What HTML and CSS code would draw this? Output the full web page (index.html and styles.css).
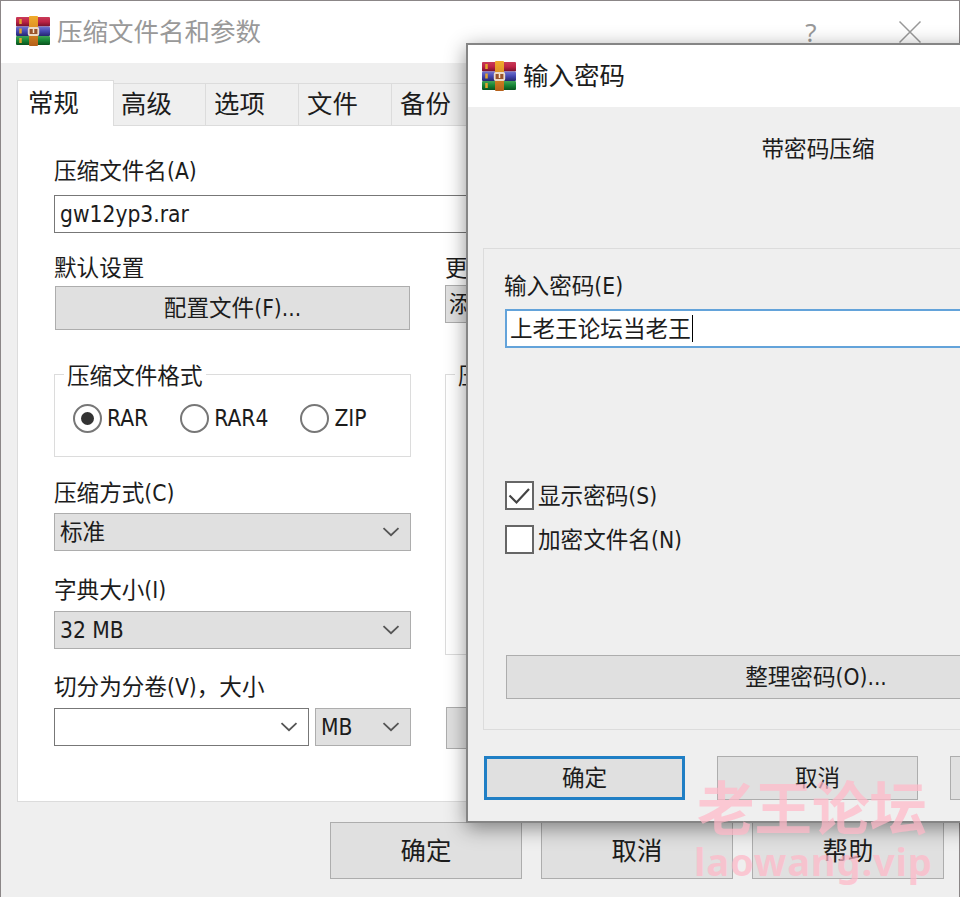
FILE: index.html
```html
<!DOCTYPE html>
<html lang="zh-CN">
<head>
<meta charset="utf-8">
<title>压缩文件名和参数</title>
<link rel="stylesheet" href="styles.css">
</head>
<body>
<svg width="0" height="0" class="defs" aria-hidden="true">
  <defs>
    <linearGradient id="red" x2="0" y2="1"><stop offset="0" stop-color="#c93b58"/><stop offset=".5" stop-color="#bd2346"/><stop offset="1" stop-color="#74102a"/></linearGradient>
    <linearGradient id="blue" x2="0" y2="1"><stop offset="0" stop-color="#7274cf"/><stop offset=".5" stop-color="#4548b0"/><stop offset="1" stop-color="#24266e"/></linearGradient>
    <linearGradient id="green" x2="0" y2="1"><stop offset="0" stop-color="#43a457"/><stop offset=".5" stop-color="#168435"/><stop offset="1" stop-color="#09521d"/></linearGradient>
    <linearGradient id="strap" x2="0" y2="1"><stop offset="0" stop-color="#f0ac2c"/><stop offset=".5" stop-color="#d98a22"/><stop offset="1" stop-color="#b5601b"/></linearGradient>
    <symbol id="books" viewBox="0 0 34 30">
      <rect y="1" width="34" height="9.500" rx="1" fill="url(#red)"/>
      <rect y="10.500" width="34" height="9.500" rx="1" fill="url(#blue)"/>
      <rect y="20" width="34" height="9" rx="1" fill="url(#green)"/>
      <path d="M4.500 3v5M4.500 12.500v5M4.500 22v5" stroke="#e3a32b" stroke-width="2.500"/>
      <rect x="13" width="9" height="30" rx="1" fill="url(#strap)"/>
      <rect x="12.700" y="12" width="9.600" height="7" rx="1" fill="#9a542b" stroke="#ecdcc8" stroke-width="1.800"/>
      <path d="M17.500 13v4" stroke="#f4e5d0" stroke-width="1.500"/>
    </symbol>
    <symbol id="chevron" viewBox="0 0 18 10"><path d="M1.500 1.200 9 8.200l7.500-7" fill="none" stroke="#555" stroke-width="1.800"/></symbol>
  </defs>
</svg>

<div class="desktop">
<main class="window">
  <header class="titlebar inactive">
    <svg class="app-icon"><use href="#books"/></svg>
    <span class="title">压缩文件名和参数</span>
    <span class="help">?</span>
    <svg class="close" viewBox="0 0 24 24"><path d="M1.500 1.500l21 21M22.500 1.500l-21 21" stroke="#999" stroke-width="1.500"/></svg>
  </header>
  <nav class="tabs">
    <span class="tab active">常规</span><span class="tab">高级</span><span class="tab">选项</span><span class="tab">文件</span><span class="tab">备份</span>
  </nav>
  <section class="panel">
    <div class="label">压缩文件名(A)</div>
    <div class="field archive">gw12yp3.rar</div>
    <div class="columns">
      <div class="column">
        <div class="label">默认设置</div>
        <div class="button profiles">配置文件(F)...</div>
        <div class="group format">
          <span class="legend">压缩文件格式</span>
          <span class="radio"><i class="dot on"></i>RAR</span>
          <span class="radio"><i class="dot"></i>RAR4</span>
          <span class="radio"><i class="dot"></i>ZIP</span>
        </div>
        <div class="label method">压缩方式(C)</div>
        <div class="field select">标准<svg><use href="#chevron"/></svg></div>
        <div class="label dict">字典大小(I)</div>
        <div class="field select">32 MB<svg><use href="#chevron"/></svg></div>
        <div class="label split">切分为分卷(V)，大小</div>
        <div class="volumes">
          <div class="field combo"><svg><use href="#chevron"/></svg></div>
          <div class="field select unit">MB<svg><use href="#chevron"/></svg></div>
        </div>
      </div>
      <div class="column">
        <div class="label">更</div>
        <div class="field select update">添</div>
        <div class="group options"><span class="legend">压</span></div>
        <div class="button extra"></div>
      </div>
    </div>
  </section>
  <footer class="actions">
    <div class="button">确定</div><div class="button">取消</div><div class="button">帮助</div>
  </footer>
</main>

<section class="dialog">
  <header class="titlebar">
    <svg class="app-icon"><use href="#books"/></svg>
    <span class="title">输入密码</span>
  </header>
  <p class="heading">带密码压缩</p>
  <div class="password-group">
    <div class="label">输入密码(E)</div>
    <div class="field password">上老王论坛当老王<i class="caret"></i></div>
    <div class="check show"><i class="box"><svg viewBox="0 0 25 25"><path d="M2.500 12.500l7 7L22 6" fill="none" stroke="#444" stroke-width="2.200"/></svg></i>显示密码(S)</div>
    <div class="check"><i class="box"></i>加密文件名(N)</div>
    <div class="button organize">整理密码(O)...</div>
  </div>
  <footer class="dialog-actions">
    <div class="button default">确定</div><div class="button">取消</div><div class="button"></div>
  </footer>
</section>

<div class="watermark"><div class="mark-name">老王论坛</div><div class="mark-site">laowang.vip</div></div>
</div>
</body>
</html>
```
FILE: styles.css
```css
* { box-sizing: border-box; }
body {
  margin: 0;
  color: #1c1c1c;
  font: 22.6px/28px "DejaVu Sans Condensed", "Noto Sans CJK SC", sans-serif;
}
i { font-style: normal; }
.defs { position: absolute; }
.desktop {
  position: relative;
  width: 960px;
  height: 897px;
  overflow: hidden;
  background: #8b8687;
}
.window {
  position: absolute;
  left: 1px;
  top: 1px;
  width: 958px;
  height: 900px;
  background: #efefef;
}
.titlebar {
  display: flex;
  align-items: center;
  height: 62px;
  padding-left: 15px;
  background: #fff;
  font-size: 25.5px;
}
.app-icon { width: 34px; height: 30px; flex: none; }
.title { margin-left: 7px; white-space: nowrap; }
.inactive { color: #999; }
.inactive .app-icon { margin-top: -3px; }
.help { margin-left: auto; width: 16px; text-align: center; font: 26px/28px "Noto Sans", sans-serif; }
.close { width: 24px; height: 24px; margin: 0 37px 0 79px; }
.tabs {
  position: relative;
  display: flex;
  align-items: flex-end;
  height: 62px;
  padding-left: 16px;
  font-size: 25.4px;
}
.tab {
  width: 93px;
  height: 42px;
  padding: 6px 0 0 8px;
  border: 1px solid #dcdcdc;
  border-width: 1px 1px 0 0;
}
.tab.active {
  width: 97px;
  height: 46px;
  margin-bottom: -1px;
  padding: 8px 0 0 10px;
  border-left-width: 1px;
  background: #fff;
}
.tab.active + .tab { width: 92px; padding-left: 7px; }
.panel {
  width: 926px;
  height: 677px;
  margin-left: 16px;
  padding: 31px 0 0 36px;
  background: #fff;
  border: 1px solid #dcdcdc;
}
.label { height: 28px; white-space: nowrap; }
.field {
  display: flex;
  align-items: center;
  height: 38px;
  padding-left: 5px;
  border: 1px solid #777;
  background: #fff;
  white-space: nowrap;
}
.archive { width: 856px; margin-top: 10px; }
.columns { display: flex; gap: 34px; padding-top: 21px; }
.column { width: 357px; }
.button {
  display: flex;
  align-items: center;
  justify-content: center;
  height: 44px;
  border: 1px solid #adadad;
  background: #e0e0e0;
  white-space: nowrap;
}
.profiles { margin: 4px 1px 0 1px; }
.group { position: relative; border: 1px solid #dcdcdc; }
.legend {
  position: absolute;
  left: 9px;
  top: -13px;
  padding: 0 3px;
  background: #fff;
}
.format {
  display: flex;
  gap: 32px;
  height: 83px;
  margin-top: 44px;
  padding: 29px 0 0 18px;
}
.radio { display: flex; align-items: center; gap: 5px; height: 28px; }
.dot {
  width: 29px;
  height: 29px;
  padding: 6px;
  border: 2px solid #777;
  border-radius: 50%;
}
.dot.on::before {
  content: "";
  display: block;
  width: 13px;
  height: 13px;
  border-radius: 50%;
  background: #333;
}
.method { margin: 22px 0 6px; }
.select { background: #e0e0e0; border-color: #adadad; }
.field svg { width: 18px; height: 10px; margin: 0 10px 0 auto; }
.dict { margin: 25px 0 7px; }
.split { margin: 24px 0 7px; }
.volumes { display: flex; gap: 6px; }
.combo { width: 255px; }
.unit { width: 96px; }
.update { margin-top: 3px; padding-left: 3px; }
.options { height: 281px; margin-top: 51px; }
.extra { height: 42px; margin: 52px 0 0 1px; }
.actions {
  display: flex;
  gap: 19px;
  padding: 20px 0 0 329px;
  font-size: 25.4px;
}
.actions .button { width: 192px; height: 57px; }

.dialog {
  position: absolute;
  left: 466px;
  top: 43px;
  width: 704px;
  height: 780px;
  border: 2px solid #858585;
  background: #efefef;
  box-shadow: 0 5px 19px rgba(0, 0, 0, .43);
}
.heading { height: 28px; margin: 28px 0 0; text-align: center; }
.password-group {
  width: 670px;
  height: 482px;
  margin: 85px 0 0 15px;
  padding: 23px 22px 0 21px;
  border: 1px solid #dcdcdc;
}
.dialog .titlebar { padding-left: 14px; }
.password-group .label { margin-left: -1px; }
.password {
  width: 640px;
  height: 39px;
  margin-top: 9px;
  padding-left: 3px;
  border: 2px solid #63a3da;
}
.caret { width: 1px; height: 27px; margin-left: 1px; background: #000; }
.check { display: flex; align-items: center; gap: 4px; height: 29px; margin-top: 15px; }
.show { margin-top: 133px; }
.box { width: 29px; height: 29px; border: 2px solid #666; background: #fff; }
.box svg { display: block; width: 25px; height: 25px; }
.organize { width: 620px; margin: 101px 0 0 1px; }
.dialog-actions { display: flex; gap: 32px; margin: 26px 0 0 16px; }
.dialog-actions .button { width: 201px; height: 44px; flex: none; }
.dialog-actions .default { border: 3px solid #207fc5; }
.watermark {
  position: absolute;
  left: 697px;
  top: 776px;
  color: rgba(255, 184, 200, .72);
  font-weight: 700;
  white-space: nowrap;
}
.mark-name { font-family: "Noto Sans CJK SC", sans-serif; font-size: 57.5px; line-height: 58px; }
.mark-site { margin: 2px 0 0 -3px; font: 700 38px/50px "Noto Sans", sans-serif; letter-spacing: .9px; }
```
